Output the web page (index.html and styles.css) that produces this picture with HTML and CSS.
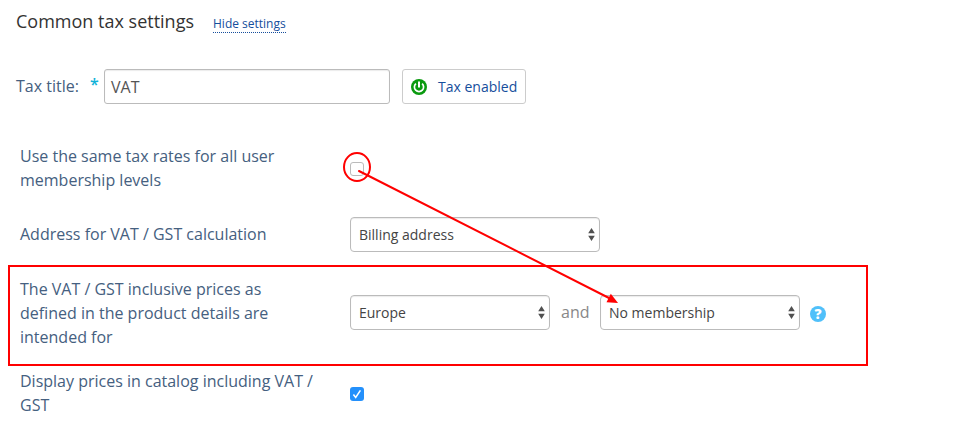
FILE: index.html
```html
<!DOCTYPE html>
<html lang="en">
<head>
<meta charset="utf-8">
<title>Common tax settings</title>
<link rel="stylesheet" href="styles.css">
</head>
<body>
<main class="page">
  <header class="heading">
    <h2 class="heading-title">Common tax settings</h2>
    <a class="heading-toggle">Hide settings</a>
  </header>

  <div class="title-row">
    <span class="title-label">Tax title:</span>
    <span class="required">*</span>
    <div class="text-input">VAT</div>
    <div class="switch">
      <svg class="switch-icon" width="16" height="16" viewBox="0 0 16 16">
        <circle cx="8" cy="8" r="8" fill="#0a9a0f"/>
        <path d="M4.9 4.6A4.6 4.6 0 1 0 11.1 4.6" fill="none" stroke="#fff" stroke-width="1.7"/>
        <path d="M8 2.6V8.4" stroke="#fff" stroke-width="2"/>
      </svg>
      <span class="switch-text">Tax enabled</span>
    </div>
  </div>

  <div class="options">
    <div class="row row-same">
      <div class="label">Use the same tax rates for all user membership levels</div>
      <div class="field"><span class="checkbox"></span></div>
    </div>
    <div class="row row-address">
      <div class="label">Address for VAT / GST calculation</div>
      <div class="field">
        <div class="select select-wide"><span>Billing address</span>
          <svg class="arrows" width="7" height="13" viewBox="0 0 7 13"><path d="M0.2 5.3L3.5 0L6.8 5.3ZM0.2 7.7H6.8L3.5 13Z" fill="#505050"/></svg></div>
      </div>
    </div>
    <div class="row row-prices">
      <div class="label">The VAT / GST inclusive prices as defined in the product details are intended for</div>
      <div class="field">
        <div class="select"><span>Europe</span>
          <svg class="arrows" width="7" height="13" viewBox="0 0 7 13"><path d="M0.2 5.3L3.5 0L6.8 5.3ZM0.2 7.7H6.8L3.5 13Z" fill="#505050"/></svg></div>
        <span class="and">and</span>
        <div class="select"><span>No membership</span>
          <svg class="arrows" width="7" height="13" viewBox="0 0 7 13"><path d="M0.2 5.3L3.5 0L6.8 5.3ZM0.2 7.7H6.8L3.5 13Z" fill="#505050"/></svg></div>
        <span class="help">?</span>
      </div>
    </div>
    <div class="row row-display">
      <div class="label">Display prices in catalog including VAT / GST</div>
      <div class="field"><span class="checkbox checked"><svg width="14" height="14" viewBox="0 0 14 14"><path d="M3.4 7.6L5.7 10.4L10.4 3.4" fill="none" stroke="#fff" stroke-width="1.6"/></svg></span></div>
    </div>
  </div>

  <svg class="annotation" width="965" height="436" viewBox="0 0 965 436">
    <g fill="none" stroke="#f00" stroke-width="2">
      <rect x="9" y="266" width="858" height="99"/>
      <ellipse cx="357" cy="167" rx="13" ry="14"/>
      <path d="M359 171L609 298" stroke-linecap="round"/>
    </g>
    <path d="M618 303L606.5 302.2L610.8 293.8Z" fill="#f00"/>
  </svg>
</main>
</body>
</html>
```
FILE: styles.css
```css
* {
  box-sizing: border-box;
}

body {
  margin: 0;
  background: #fff;
  font-family: "Open Sans", sans-serif;
  font-size: 16px;
  line-height: 24px;
  color: #456080;
}

.page {
  position: relative;
  width: 965px;
  height: 436px;
  overflow: hidden;
}

.heading {
  display: flex;
  align-items: baseline;
  padding: 9px 0 0 16px;
  height: 69px;
}

.heading-title {
  width: 197px;
  margin: 0;
  font-size: 18px;
  font-weight: 400;
  color: #333;
  white-space: nowrap;
}

.heading-toggle {
  font-size: 12px;
  line-height: 17px;
  color: #154e9c;
  border-bottom: 1px dotted #154e9c;
}

.title-row {
  display: flex;
  height: 35px;
  padding-left: 16px;
  line-height: 34px;
}

.title-label {
  width: 74px;
}

.required {
  width: 14px;
  line-height: 30px;
  font-weight: 600;
  color: #0fb2d8;
}

.text-input {
  width: 286px;
  padding-left: 6px;
  border: 1px solid #bbb;
  border-radius: 3px;
  box-shadow: inset 0 1px 1px rgba(0, 0, 0, 0.08);
  color: #555;
}

.switch {
  display: flex;
  align-items: center;
  width: 124px;
  margin-left: 12px;
  padding-left: 8px;
  border: 1px solid #ccc;
  border-radius: 3px;
  font-size: 14px;
  color: #154e9c;
}

.switch-text {
  margin-left: 11px;
}

.options {
  padding: 40px 0 0 20px;
}

.row {
  display: flex;
}

.label {
  width: 330px;
  padding-right: 32px;
}

.field {
  display: flex;
}

.row-same {
  height: 73px;
}

.row-same .checkbox {
  margin-top: 18px;
}

.row-address {
  height: 78px;
}

.row-address .label {
  padding-top: 5px;
}

.row-prices {
  height: 74px;
}

.row-prices .label {
  margin-top: -18px;
}

.row-display .checkbox {
  margin-top: 18px;
}

.checkbox {
  width: 14px;
  height: 14px;
  border: 1px solid #bbb;
  border-radius: 3px;
  background: #fff;
}

.checked {
  display: flex;
  border: 0;
  background: #2490fb;
}

.select {
  display: flex;
  align-items: center;
  justify-content: space-between;
  width: 200px;
  height: 35px;
  padding: 0 4px 0 8px;
  border: 1px solid #bbb;
  border-radius: 4px;
  box-shadow: inset 0 1px 1px rgba(0, 0, 0, 0.08);
  font-size: 14px;
  color: #444;
}

.select-wide {
  width: 250px;
}

.and {
  width: 50px;
  line-height: 35px;
  padding-left: 11px;
  color: #888;
}

.help {
  width: 16px;
  height: 16px;
  margin: 11px 0 0 10px;
  border-radius: 50%;
  background: #50c0fa;
  color: #fff;
  font-size: 14px;
  font-weight: 800;
  line-height: 16px;
  text-align: center;
}

.annotation {
  position: absolute;
  top: 0;
  left: 0;
}
```
